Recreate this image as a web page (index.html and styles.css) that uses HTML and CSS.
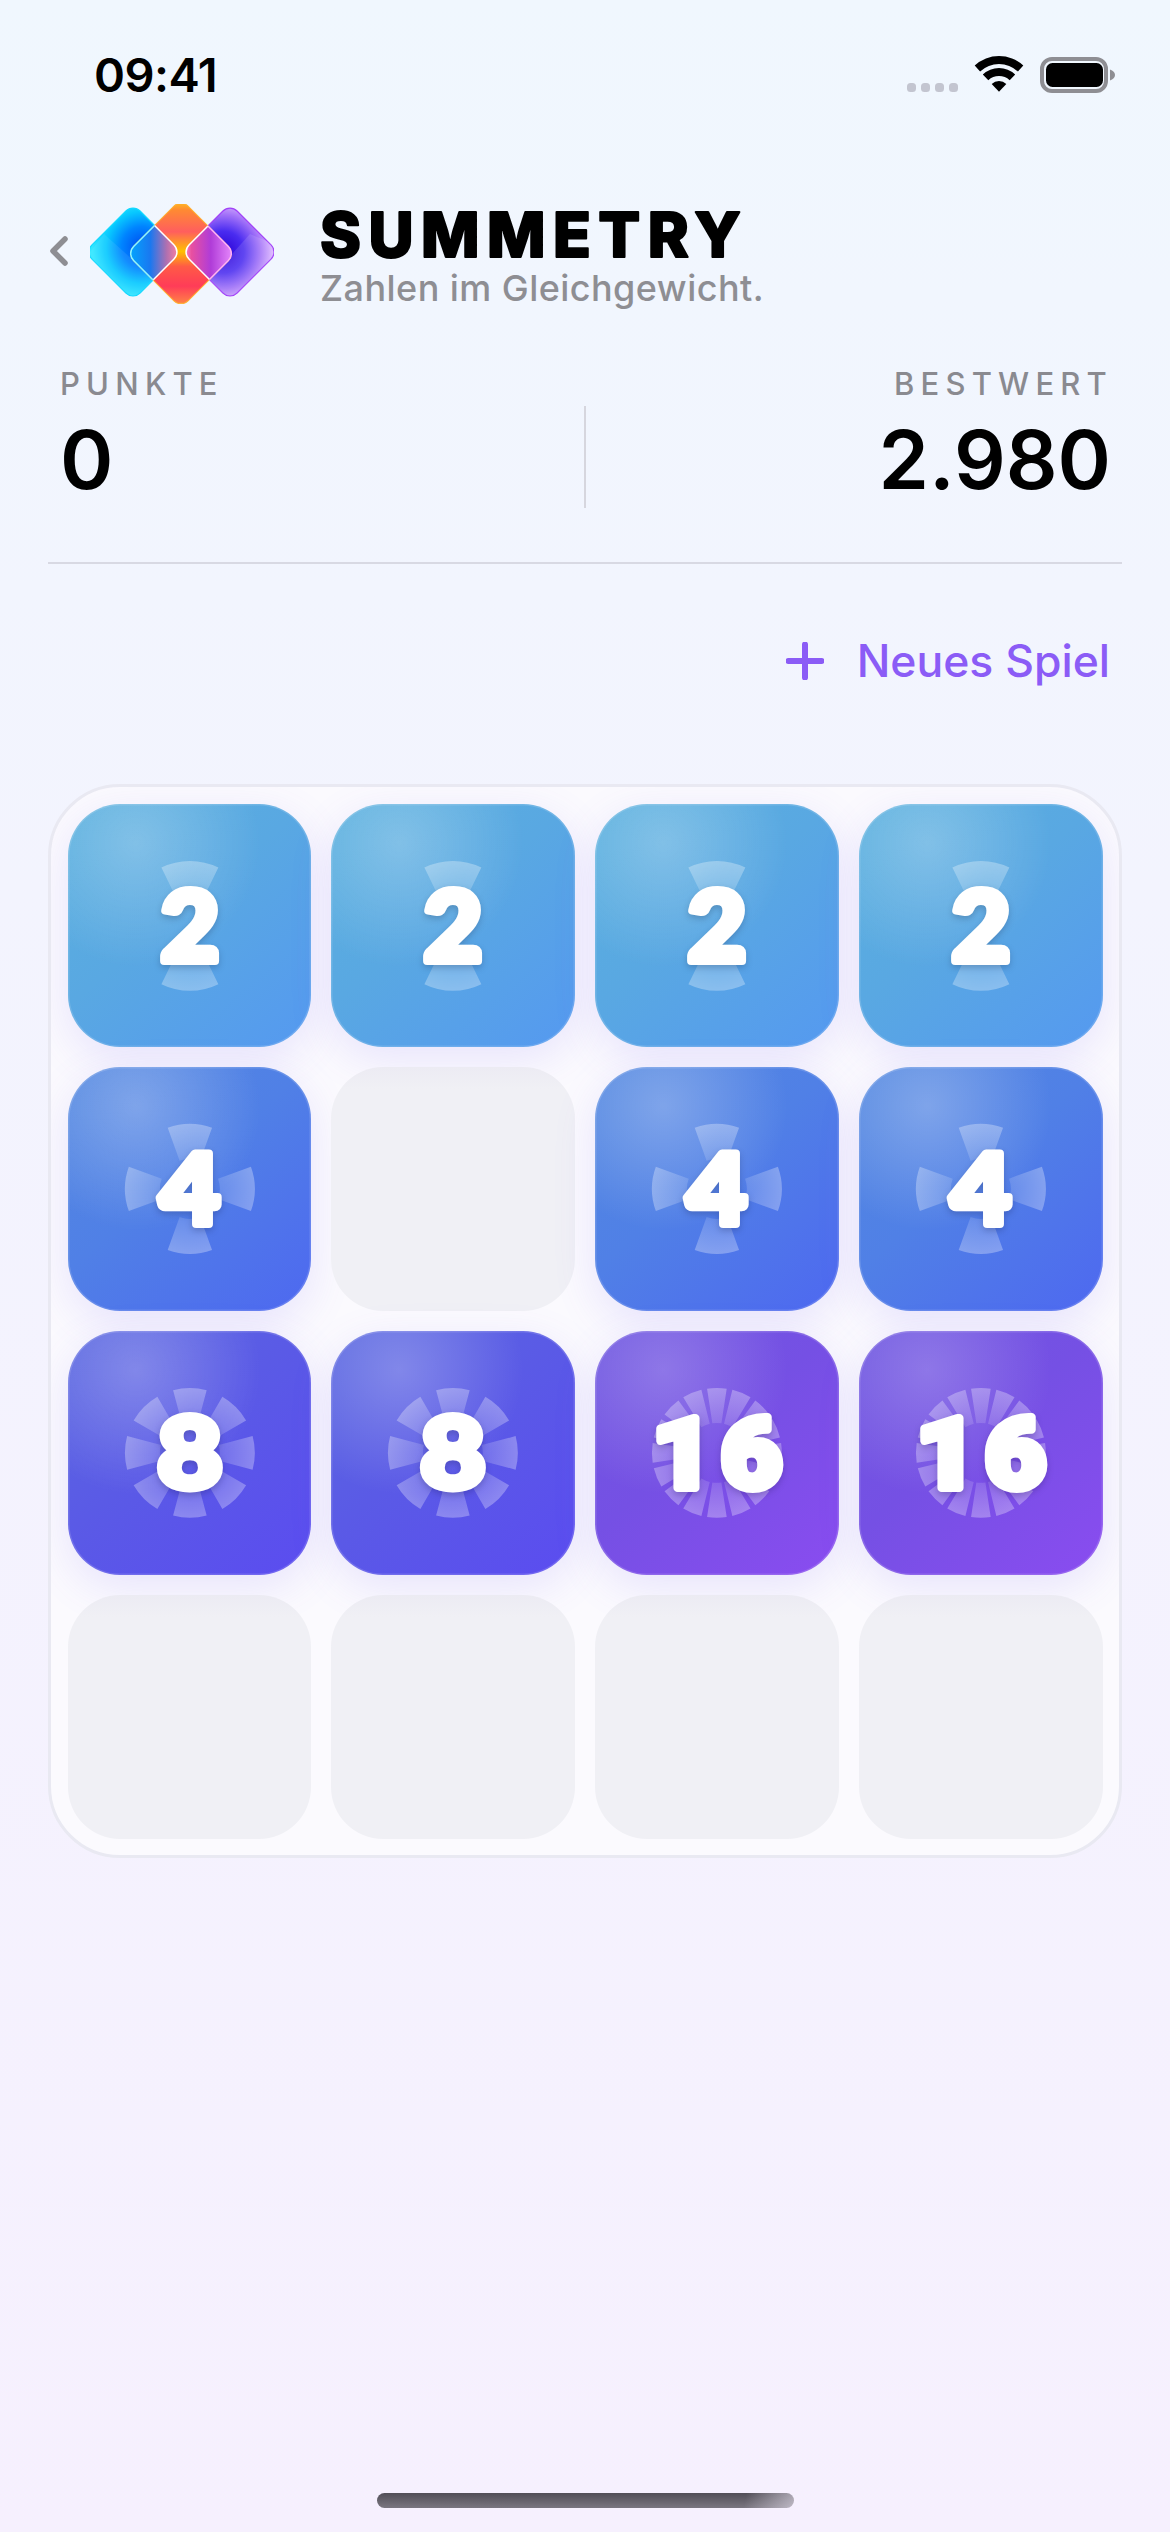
FILE: index.html
```html
<!DOCTYPE html>
<html lang="de">
<head>
<meta charset="utf-8">
<title>Summetry</title>
<link rel="stylesheet" href="styles.css">
</head>
<body>
<svg class="defs" width="0" height="0" aria-hidden="true">
  <defs>
    <radialGradient id="wedgeFill" gradientUnits="userSpaceOnUse" cx="0" cy="0" r="65">
      <stop offset="0.4" stop-color="#fff" stop-opacity="0.12"/>
      <stop offset="1" stop-color="#fff" stop-opacity="0.3"/>
    </radialGradient>
    <path id="w2" d="M-13.15 -26.96L-28.5 -58.4A65 65 0 0 1 28.5 -58.4L13.15 -26.96A30 30 0 0 0 -13.15 -26.96Z"/>
    <path id="w4" d="M-10.26 -28.19L-22.2 -61.1A65 65 0 0 1 22.2 -61.1L10.26 -28.19A30 30 0 0 0 -10.26 -28.19Z"/>
    <path id="w8" d="M-7.76 -28.98L-16.8 -62.8A65 65 0 0 1 16.8 -62.8L7.76 -28.98A30 30 0 0 0 -7.76 -28.98Z"/>
    <path id="w16" d="M-4.54 -29.65L-9.83 -64.25A65 65 0 0 1 9.83 -64.25L4.54 -29.65A30 30 0 0 0 -4.54 -29.65Z"/>
    <g id="burst2" fill="url(#wedgeFill)">
      <use href="#w2"/><use href="#w2" transform="rotate(180)"/>
    </g>
    <g id="burst4" fill="url(#wedgeFill)">
      <use href="#w4"/><use href="#w4" transform="rotate(90)"/><use href="#w4" transform="rotate(180)"/><use href="#w4" transform="rotate(270)"/>
    </g>
    <g id="burst8" fill="url(#wedgeFill)">
      <use href="#w8"/><use href="#w8" transform="rotate(45)"/><use href="#w8" transform="rotate(90)"/><use href="#w8" transform="rotate(135)"/>
      <use href="#w8" transform="rotate(180)"/><use href="#w8" transform="rotate(225)"/><use href="#w8" transform="rotate(270)"/><use href="#w8" transform="rotate(315)"/>
    </g>
    <g id="burst16" fill="url(#wedgeFill)">
      <use href="#w16"/><use href="#w16" transform="rotate(22.5)"/><use href="#w16" transform="rotate(45)"/><use href="#w16" transform="rotate(67.5)"/>
      <use href="#w16" transform="rotate(90)"/><use href="#w16" transform="rotate(112.5)"/><use href="#w16" transform="rotate(135)"/><use href="#w16" transform="rotate(157.5)"/>
      <use href="#w16" transform="rotate(180)"/><use href="#w16" transform="rotate(202.5)"/><use href="#w16" transform="rotate(225)"/><use href="#w16" transform="rotate(247.5)"/>
      <use href="#w16" transform="rotate(270)"/><use href="#w16" transform="rotate(292.5)"/><use href="#w16" transform="rotate(315)"/><use href="#w16" transform="rotate(337.5)"/>
    </g>
  </defs>
</svg>

<div class="status">
  <span class="time">09:41</span>
  <svg class="status-icons" viewBox="907 55 208 37" width="208" height="37">
    <g fill="#c3c5d0">
      <rect x="907" y="82" width="9" height="9" rx="3.5"/>
      <rect x="921" y="82" width="9" height="9" rx="3.5"/>
      <rect x="935" y="82" width="9" height="9" rx="3.5"/>
      <rect x="949" y="82" width="9" height="9" rx="3.5"/>
    </g>
    <g fill="#000">
      <path d="M974.7 64.6A35.7 35.7 0 0 1 1023.3 64.6L1017.9 70.45A27.7 27.7 0 0 0 980.1 70.45Z"/>
      <path d="M982.8 73.4A23.7 23.7 0 0 1 1015.2 73.4L1009.7 79.2A15.7 15.7 0 0 0 988.3 79.2Z"/>
      <path d="M991.7 82.9A10.7 10.7 0 0 1 1006.3 82.9L999 90.7Z"/>
    </g>
    <rect x="1042" y="58" width="64" height="32" rx="10" fill="none" stroke="#8e8e93" stroke-width="4"/>
    <rect x="1046" y="62" width="57" height="24" rx="6.5" fill="#000"/>
    <path d="M1110 68.5C1113 69.5 1115 71.5 1115 74C1115 76.5 1113 78.5 1110 79.5Z" fill="#8e8e93"/>
  </svg>
</div>

<header class="head">
  <svg class="chevron" viewBox="0 0 18 30" width="18" height="30"><path d="M15 3L3 15L15 27" fill="none" stroke="#8e8e93" stroke-width="5.5" stroke-linecap="round" stroke-linejoin="round"/></svg>
  <svg class="logo" viewBox="0 0 184 100" width="184" height="100">
    <defs>
      <radialGradient id="blueFill" gradientUnits="userSpaceOnUse" cx="3.5" cy="-10" r="50">
        <stop offset="0" stop-color="#0048ee"/>
        <stop offset="0.42" stop-color="#0084ff"/>
        <stop offset="0.72" stop-color="#08c8ff"/>
        <stop offset="1" stop-color="#30e6ff"/>
      </radialGradient>
      <radialGradient id="purpleFill" gradientUnits="userSpaceOnUse" cx="-5" cy="5" r="50">
        <stop offset="0" stop-color="#2a00d4"/>
        <stop offset="0.42" stop-color="#4a2cf0"/>
        <stop offset="0.74" stop-color="#a070f8"/>
        <stop offset="1" stop-color="#dcb4ff"/>
      </radialGradient>
      <linearGradient id="redFill" x1="0" y1="0" x2="1" y2="1">
        <stop offset="0" stop-color="#ffd21a"/>
        <stop offset="0.1" stop-color="#ff8a32"/>
        <stop offset="0.3" stop-color="#ff5e5e"/>
        <stop offset="0.48" stop-color="#ffc000"/>
        <stop offset="0.62" stop-color="#ff5a46"/>
        <stop offset="0.8" stop-color="#ff3c58"/>
        <stop offset="0.94" stop-color="#ff7a48"/>
        <stop offset="1" stop-color="#ffc420"/>
      </linearGradient>
      <linearGradient id="lensBlue" x1="0" y1="1" x2="1" y2="0">
        <stop offset="0.45" stop-color="#00a8ff"/>
        <stop offset="0.68" stop-color="#1a78f0"/>
        <stop offset="0.85" stop-color="#b070b0"/>
        <stop offset="0.97" stop-color="#ff80a0"/>
      </linearGradient>
      <linearGradient id="lensPurple" x1="0" y1="1" x2="1" y2="0">
        <stop offset="0.02" stop-color="#ff90c8"/>
        <stop offset="0.1" stop-color="#e850a0"/>
        <stop offset="0.3" stop-color="#b03cd8"/>
        <stop offset="0.5" stop-color="#e080f8"/>
      </linearGradient>
      <clipPath id="clipRed"><rect x="-38.5" y="-38.5" width="77" height="77" rx="10" transform="translate(91 49.5) rotate(45)"/></clipPath>
      <clipPath id="clipBlue"><rect x="-34" y="-34" width="68" height="68" rx="10" transform="translate(43 48) rotate(45)"/></clipPath>
      <clipPath id="clipPurple"><rect x="-34" y="-34" width="68" height="68" rx="10" transform="translate(140 48) rotate(45)"/></clipPath>
    </defs>
    <rect x="-34" y="-34" width="68" height="68" rx="10" transform="translate(43 48) rotate(45)" fill="url(#blueFill)" stroke="#10d8ff" stroke-width="1.2"/>
    <rect x="-34" y="-34" width="68" height="68" rx="10" transform="translate(140 48) rotate(45)" fill="url(#purpleFill)" stroke="#a040f8" stroke-width="1.2"/>
    <g clip-path="url(#clipBlue)"><path d="M0 48L14 30L70 80L40 100L0 100Z" fill="#fff" opacity="0.08"/></g>
    <g clip-path="url(#clipPurple)"><path d="M184 40L160 30L106 90L140 100L184 100Z" fill="#fff" opacity="0.12"/></g>
    <rect x="-38.5" y="-38.5" width="77" height="77" rx="10" transform="translate(91 49.5) rotate(45)" fill="url(#redFill)" stroke="#ffb030" stroke-width="1"/>
    <g clip-path="url(#clipRed)">
      <rect x="-34" y="-34" width="68" height="68" rx="10" transform="translate(43 48) rotate(45)" fill="url(#lensBlue)" stroke="#fff" stroke-width="1.5"/>
      <rect x="-34" y="-34" width="68" height="68" rx="10" transform="translate(140 48) rotate(45)" fill="url(#lensPurple)" stroke="#fff" stroke-width="1.5"/>
    </g>
    <g clip-path="url(#clipBlue)"><rect x="-38.5" y="-38.5" width="77" height="77" rx="10" transform="translate(91 49.5) rotate(45)" fill="none" stroke="#8ff4ff" stroke-width="1.5"/></g>
    <g clip-path="url(#clipPurple)"><rect x="-38.5" y="-38.5" width="77" height="77" rx="10" transform="translate(91 49.5) rotate(45)" fill="none" stroke="#ffb0f4" stroke-width="1.5"/></g>
  </svg>
  <div class="brand">
    <svg class="brand-title" viewBox="0 0 424 54" width="424" height="54"><text x="1" y="50">SUMMETRY</text></svg>
    <div class="brand-sub">Zahlen im Gleichgewicht.</div>
  </div>
</header>

<section class="scores">
  <div class="score">
    <div class="score-label">PUNKTE</div>
    <div class="score-value">0</div>
  </div>
  <div class="score-rule"></div>
  <div class="score score-right">
    <div class="score-label">BESTWERT</div>
    <div class="score-value">2.980</div>
  </div>
</section>

<div class="rule"></div>

<div class="actions">
  <svg class="plus" viewBox="0 0 38 38" width="38" height="38"><path d="M19 2.5V35.5M2.5 19H35.5" stroke="#8b5cf6" stroke-width="6" stroke-linecap="round"/></svg>
  <span class="new-game">Neues Spiel</span>
</div>

<main class="board">
  <div class="tile t2"><svg class="art" viewBox="-122 -122 244 244"><use href="#burst2"/><text class="num" y="35">2</text></svg></div>
  <div class="tile t2"><svg class="art" viewBox="-122 -122 244 244"><use href="#burst2"/><text class="num" y="35">2</text></svg></div>
  <div class="tile t2"><svg class="art" viewBox="-122 -122 244 244"><use href="#burst2"/><text class="num" y="35">2</text></svg></div>
  <div class="tile t2"><svg class="art" viewBox="-122 -122 244 244"><use href="#burst2"/><text class="num" y="35">2</text></svg></div>

  <div class="tile t4"><svg class="art" viewBox="-122 -122 244 244"><use href="#burst4"/><text class="num" y="35">4</text></svg></div>
  <div class="tile empty"></div>
  <div class="tile t4"><svg class="art" viewBox="-122 -122 244 244"><use href="#burst4"/><text class="num" y="35">4</text></svg></div>
  <div class="tile t4"><svg class="art" viewBox="-122 -122 244 244"><use href="#burst4"/><text class="num" y="35">4</text></svg></div>

  <div class="tile t8"><svg class="art" viewBox="-122 -122 244 244"><use href="#burst8"/><text class="num" y="35">8</text></svg></div>
  <div class="tile t8"><svg class="art" viewBox="-122 -122 244 244"><use href="#burst8"/><text class="num" y="35">8</text></svg></div>
  <div class="tile t16"><svg class="art" viewBox="-122 -122 244 244"><use href="#burst16"/><text class="num" y="35">16</text></svg></div>
  <div class="tile t16"><svg class="art" viewBox="-122 -122 244 244"><use href="#burst16"/><text class="num" y="35">16</text></svg></div>

  <div class="tile empty"></div>
  <div class="tile empty"></div>
  <div class="tile empty"></div>
  <div class="tile empty"></div>
</main>

<div class="home-indicator"></div>
</body>
</html>
```

FILE: styles.css
```css
* { box-sizing: border-box; }
html, body { margin: 0; padding: 0; }
body {
  width: 1170px;
  height: 2532px;
  overflow: hidden;
  display: flex;
  flex-direction: column;
  background: linear-gradient(180deg, #f0f7fe 0%, #f3f4fe 35%, #f6f0fe 100%);
  font-family: "Inter", "Liberation Sans", sans-serif;
  color: #000;
}
.defs { position: absolute; }

.status {
  height: 149px;
  padding: 0 55px 0 94px;
  display: flex;
  align-items: center;
  justify-content: space-between;
  flex: none;
}
.time { font-size: 47px; font-weight: 600; line-height: 56px; letter-spacing: -0.5px; }
.status-icons { display: block; }

.head {
  margin-top: 55px;
  height: 100px;
  padding-left: 50px;
  display: flex;
  align-items: flex-start;
  flex: none;
}
.chevron { margin-top: 32px; display: block; flex: none; }
.logo { margin-left: 22px; display: block; flex: none; }
.brand { margin-left: 46px; padding-top: 3px; }
.brand-title { display: block; margin-left: -1px; overflow: visible; }
.brand-title text {
  font-family: "Inter", sans-serif;
  font-weight: 800;
  font-size: 62px;
  letter-spacing: 7.5px;
  fill: #000;
  stroke: #000;
  stroke-width: 2px;
  stroke-linejoin: round;
}
.brand-sub {
  margin-top: 5px;
  font-size: 36px;
  line-height: 44px;
  font-weight: 500;
  color: #8e8e93;
  letter-spacing: 0.45px;
  white-space: nowrap;
}

.scores {
  margin-top: 61px;
  padding: 0 60px;
  height: 196px;
  display: flex;
  align-items: flex-start;
  justify-content: space-between;
  flex: none;
}
.score { display: flex; flex-direction: column; flex: 1; }
.score-right { align-items: flex-end; }
.score-label {
  font-size: 31px;
  line-height: 38px;
  font-weight: 500;
  letter-spacing: 6.2px;
  color: #8a8a90;
}
.score-right .score-label { margin-right: -3px; }
.score-value {
  margin-top: 9px;
  font-size: 81px;
  line-height: 96px;
  font-weight: 600;
}
.score-right .score-value { margin-right: -1px; }
.score-rule { width: 2px; height: 102px; margin-top: 41px; background: #d6d6de; flex: none; }

.rule { margin: 1px 48px 0; height: 2px; background: #d8d9e3; flex: none; }

.actions {
  margin-top: 59px;
  padding-right: 60px;
  height: 76px;
  display: flex;
  align-items: center;
  justify-content: flex-end;
  flex: none;
}
.plus { display: block; margin-right: 33px; }
.new-game { font-size: 44.5px; line-height: 56px; font-weight: 500; color: #8b5cf6; }

.board {
  margin: 85px 48px 0;
  width: 1074px;
  height: 1074px;
  padding: 16.5px;
  display: grid;
  grid-template-columns: repeat(4, 1fr);
  grid-template-rows: repeat(4, 1fr);
  gap: 20px;
  border: 3px solid #e9e9f2;
  border-radius: 72px;
  background: #fbfafe;
  overflow: hidden;
  flex: none;
}
.tile { border-radius: 52px; position: relative; }
.empty { background: linear-gradient(180deg, #ecebf3 0, #f0f0f5 22px); }
.art { display: block; width: 100%; height: 100%; border-radius: inherit; }
.num {
  font-family: "Lato", sans-serif;
  font-weight: 900;
  font-size: 98px;
  text-anchor: middle;
  fill: #fff;
  stroke: #fff;
  stroke-width: 8px;
  stroke-linejoin: round;
  filter: drop-shadow(0 3px 3px rgba(0, 0, 30, .18));
}
.t2 .num { transform: scaleX(1.03); }
.t4 .num { transform: scaleX(1.06); }
.t8 .num { transform: scaleX(1.14); }
.t16 .num {
  font-family: "Roboto", sans-serif;
  letter-spacing: 7px;
  transform: translateX(4px) scaleX(1.08);
}
.t2, .t4, .t8, .t16 {
  box-shadow: 0 12px 44px rgba(110, 90, 240, .14), inset 0 0 0 1.5px rgba(255, 255, 255, .14);
}
.t2 {
  background:
    radial-gradient(circle at 28% 16%, rgba(255, 255, 255, .24) 0%, rgba(255, 255, 255, 0) 46%),
    linear-gradient(140deg, #5ab0de 0%, #59a8e2 45%, #5599f0 100%);
}
.t4 {
  background:
    radial-gradient(circle at 28% 16%, rgba(255, 255, 255, .26) 0%, rgba(255, 255, 255, 0) 46%),
    linear-gradient(140deg, #5388e0 0%, #5080e6 45%, #4e68f0 100%);
}
.t8 {
  background:
    radial-gradient(circle at 28% 16%, rgba(255, 255, 255, .24) 0%, rgba(255, 255, 255, 0) 46%),
    linear-gradient(140deg, #5a68e0 0%, #5a5ae6 45%, #5b4cf0 100%);
}
.t16 {
  background:
    radial-gradient(circle at 28% 16%, rgba(255, 255, 255, .2) 0%, rgba(255, 255, 255, 0) 46%),
    linear-gradient(140deg, #6f58e0 0%, #7550e4 45%, #8a4cf0 100%);
}

.home-indicator {
  margin: auto 0 24px 377px;
  width: 417px;
  height: 15px;
  border-radius: 8px;
  background:
    linear-gradient(100deg, rgba(246, 240, 254, 0) 88%, rgba(246, 240, 254, .55) 100%),
    linear-gradient(180deg, #524e57 0%, #7a7680 100%);
  flex: none;
}
```
